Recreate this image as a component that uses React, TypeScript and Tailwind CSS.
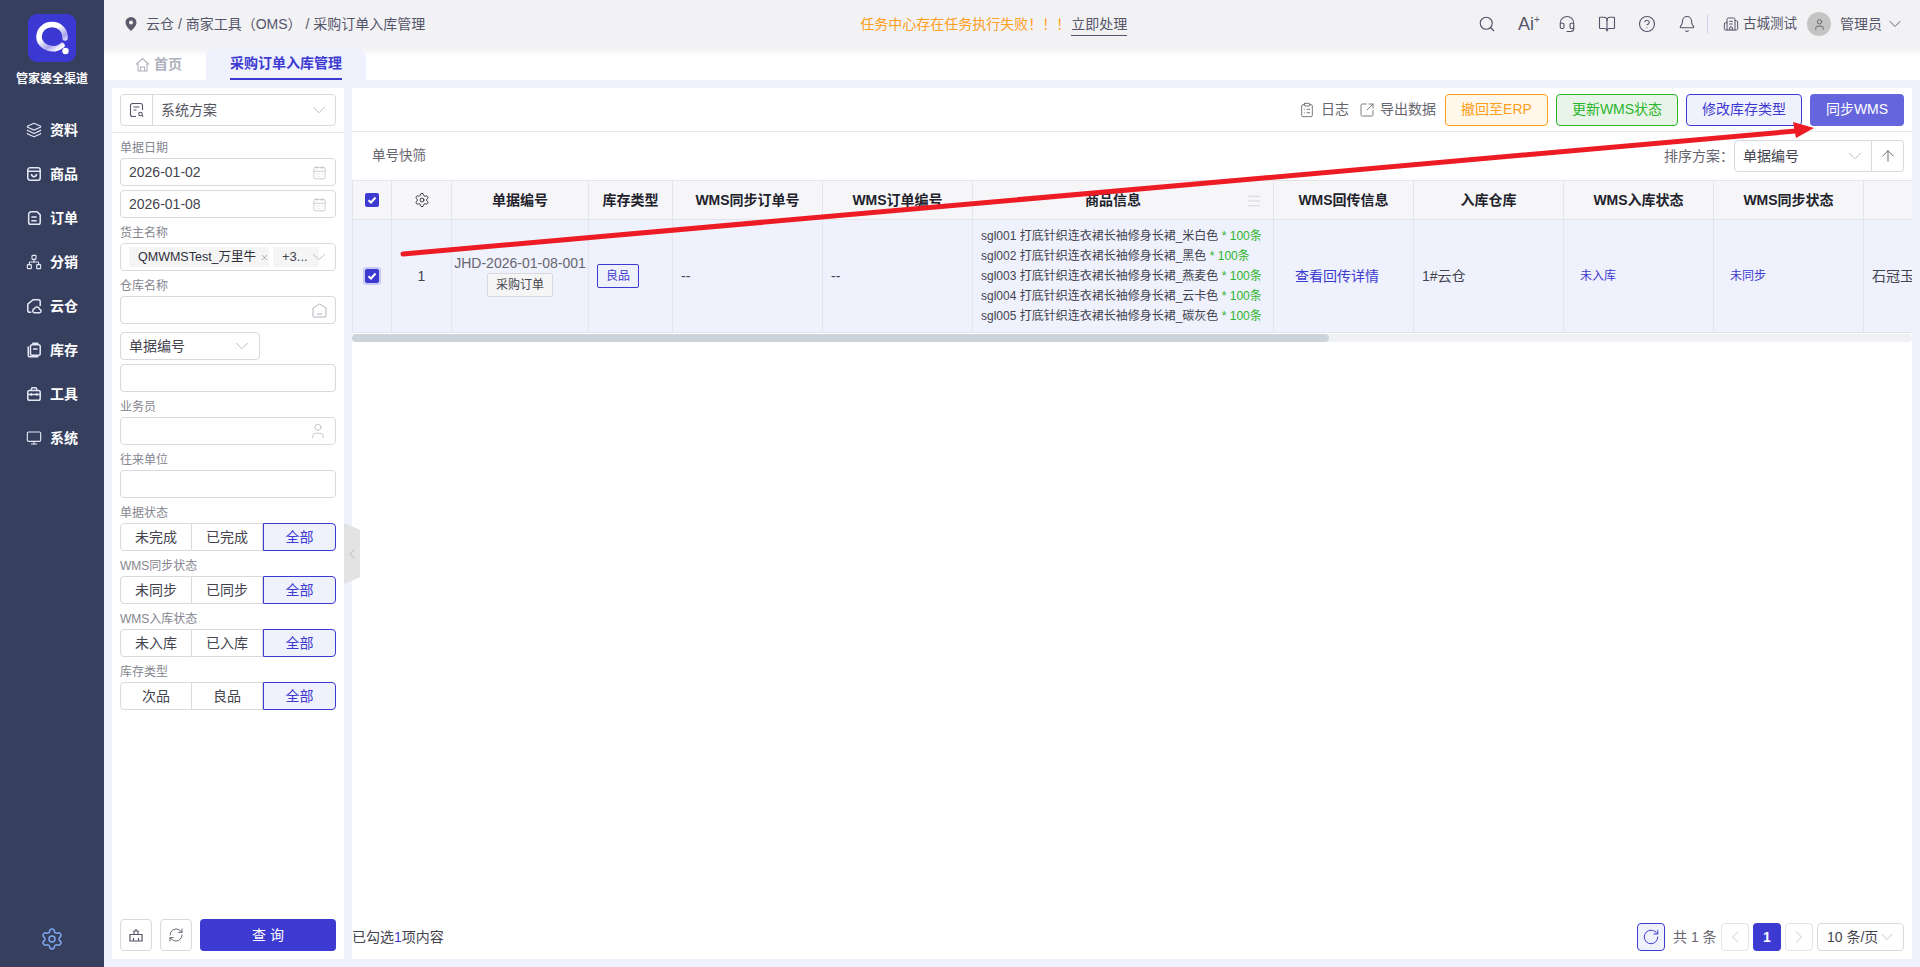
import {
  ArrowUp,
  Bell,
  BookOpen,
  Building2,
  CalendarDays,
  ChevronDown,
  ChevronLeft,
  ChevronRight,
  CircleHelp,
  ClipboardList,
  Headset,
  Layers,
  Menu,
  Monitor,
  Network,
  RefreshCw,
  RotateCw,
  Search,
  Settings,
  SquareArrowOutUpRight,
  User,
  X,
} from "lucide-react";
import type { ReactNode } from "react";

const font = "font-['Liberation_Sans','Noto_Sans_CJK_SC',sans-serif]";

function BagIcon() {
  return (
    <svg width="18" height="18" viewBox="0 0 18 18" fill="none" stroke="currentColor" strokeWidth="1.7">
      <rect x="2" y="2" width="14" height="14" rx="2.5" />
      <path d="M2 6h14M6 9c.5 2 1.5 3 3 3s2.500-1 3-3" />
    </svg>
  );
}

function OrderIcon() {
  return (
    <svg width="18" height="18" viewBox="0 0 18 18" fill="none" stroke="currentColor" strokeWidth="1.7">
      <path d="M6 2h6.500L16 5.500V14a2 2 0 0 1-2 2H5a2 2 0 0 1-2-2V5a3 3 0 0 1 3-3z" />
      <path d="M6 8h6M6 12h6" />
    </svg>
  );
}

function CloudHomeIcon() {
  return (
    <svg width="18" height="18" viewBox="0 0 18 18" fill="none" stroke="currentColor" strokeWidth="1.7">
      <path d="M6 16H4a2 2 0 0 1-2-2V7l6-5h6a2 2 0 0 1 2 2v5" />
      <path d="M9 16.500a2.300 2.300 0 0 1 .5-4.400 3 3 0 0 1 5.700.5 2 2 0 0 1 .3 3.900z" />
    </svg>
  );
}

function StockIcon() {
  return (
    <svg width="18" height="18" viewBox="0 0 18 18" fill="none" stroke="currentColor" strokeWidth="1.7">
      <rect x="5" y="3" width="11" height="12" rx="2" />
      <path d="M2.500 5v9.500A2 2 0 0 0 4.500 16.500H14M8 8h5" />
      <path d="M7 1.500h7" />
    </svg>
  );
}

function ToolIcon() {
  return (
    <svg width="18" height="18" viewBox="0 0 18 18" fill="none" stroke="currentColor" strokeWidth="1.7">
      <rect x="2" y="5" width="14" height="11" rx="2" />
      <path d="M6 5V3.500A1.500 1.500 0 0 1 7.500 2h3A1.500 1.500 0 0 1 12 3.500V5M2 9.500h14M6 8v3M12 8v3" />
    </svg>
  );
}

function SchemeIcon() {
  return (
    <svg width="16" height="16" viewBox="0 0 16 16" fill="none" stroke="currentColor" strokeWidth="1.100">
      <path d="M7 14.500H3.500a2 2 0 0 1-2-2v-9a2 2 0 0 1 2-2h8a2 2 0 0 1 2 2V8" />
      <path d="M4.500 5h6M4.500 8h3" />
      <circle cx="11.500" cy="12" r="1.800" />
      <path d="M13 13.500l1.200 1.200" />
    </svg>
  );
}

function Logo() {
  return (
    <svg width="48" height="48" viewBox="0 0 48 48" className="shrink-0">
      <rect width="48" height="48" rx="9" fill="#3c38d4" />
      <defs>
        <linearGradient id="ring" x1="0" y1="0" x2="0.8" y2="1">
          <stop offset="0.4" stopColor="#ffffff" />
          <stop offset="0.75" stopColor="#a9a6ee" />
          <stop offset="1" stopColor="#ffffff" />
        </linearGradient>
      </defs>
      <path
        d="M34 31.500a15 15 0 0 1-7 3.200C17 35.500 11 29 11 23c0-7 5.500-12.500 13-12.500S37 16 37 23v1"
        fill="none"
        stroke="url(#ring)"
        strokeWidth="5.500"
        strokeLinecap="round"
      />
      <circle cx="37.500" cy="37" r="3.200" fill="#fff" />
    </svg>
  );
}

const navItems: { label: string; icon: ReactNode }[] = [
  { label: "资料", icon: <Layers size={18} strokeWidth={1.7} /> },
  { label: "商品", icon: <BagIcon /> },
  { label: "订单", icon: <OrderIcon /> },
  { label: "分销", icon: <Network size={18} strokeWidth={1.7} /> },
  { label: "云仓", icon: <CloudHomeIcon /> },
  { label: "库存", icon: <StockIcon /> },
  { label: "工具", icon: <ToolIcon /> },
  { label: "系统", icon: <Monitor size={18} strokeWidth={1.7} /> },
];

function Sidebar() {
  return (
    <aside className="flex h-full w-[104px] shrink-0 flex-col items-center bg-[#373f5f] text-white">
      <div className="mt-[14px]">
        <Logo />
      </div>
      <div className="mt-[9px] text-[12px] leading-[16px] font-bold whitespace-nowrap">管家婆全渠道</div>
      <nav className="mt-[21px] flex flex-col">
        {navItems.map((item) => (
          <div key={item.label} className="flex h-[44px] w-[52px] items-center gap-[8px] text-[14px] font-bold">
            <span className="flex w-[16px] justify-center text-[#e4e7f5]">{item.icon}</span>
            <span className="whitespace-nowrap">{item.label}</span>
          </div>
        ))}
      </nav>
      <div className="mt-auto mb-[16px] text-[#7ea6ee]">
        <Settings size={24} strokeWidth={1.5} />
      </div>
    </aside>
  );
}

function TopBar() {
  return (
    <header className="relative flex h-[48px] shrink-0 items-center bg-[#f2f2f5] pr-[16px] pl-[21px] text-[14px] text-[#55556a]">
      <svg width="12" height="14" viewBox="0 0 12 14" className="shrink-0">
        <path d="M6 0a5.500 5.500 0 0 0-5.500 5.500C.5 9.500 6 14 6 14s5.500-4.500 5.500-8.500A5.500 5.500 0 0 0 6 0z" fill="#5c5c6e" />
        <circle cx="6" cy="5.500" r="2" fill="#f2f2f5" />
      </svg>
      <span className="ml-[9px] whitespace-nowrap">云仓 / 商家工具（OMS） / 采购订单入库管理</span>
      <div className="ml-[435px] flex items-center whitespace-nowrap">
        <span className="w-[211px] text-[#ff9d1c]">任务中心存在任务执行失败！！！</span>
        <span className="border-b border-[#55556a] leading-[22px]">立即处理</span>
      </div>
      <div className="ml-auto flex items-center text-[#55556a]">
        <div className="flex items-center gap-[22px]">
          <Search size={18} strokeWidth={1.5} />
          <span className="flex w-[18px] items-start text-[18px] leading-[18px]">
            Ai<span className="text-[10px] leading-[10px]">+</span>
          </span>
          <Headset size={18} strokeWidth={1.5} />
          <BookOpen size={18} strokeWidth={1.5} />
          <CircleHelp size={18} strokeWidth={1.5} />
          <Bell size={18} strokeWidth={1.5} />
        </div>
        <span className="mr-[15px] ml-[11px] h-[20px] w-px bg-[#cfd3ee]" />
        <Building2 size={16} strokeWidth={1.5} />
        <span className="ml-[4px] text-[13.500px] whitespace-nowrap">古城测试</span>
        <span className="ml-[10px] flex h-[24px] w-[24px] items-center justify-center rounded-full bg-[#c4c4c4] text-[#555]">
          <User size={13} strokeWidth={1.5} />
        </span>
        <span className="ml-[9px] whitespace-nowrap">管理员</span>
        <ChevronDown size={20} strokeWidth={1.1} className="-mr-[1px] ml-[3px]" />
      </div>
    </header>
  );
}

function Tabs() {
  return (
    <div className="flex h-[32px] shrink-0 items-stretch bg-[linear-gradient(#f2f2f5,#ffffff_9px)] pl-[31px] text-[14px]">
      <div className="flex w-[71px] items-center gap-[4px] font-bold text-[#aeb1bd]">
        <svg width="15" height="15" viewBox="0 0 15 15" fill="none" stroke="currentColor" strokeWidth="1.100">
          <path d="M1 7.500 7.500 1.500 14 7.500M3 6.500V14h9V6.500M5.500 14v-4h4v4" />
        </svg>
        首页
      </div>
      <div className="flex w-[160px] justify-center rounded-t-[10px] bg-[#eff1fd]">
        <span className="flex h-full items-center border-b-2 border-[#3d3ad1] font-bold text-[#3d3ad1]">采购订单入库管理</span>
      </div>
    </div>
  );
}

function Box({ children, className = "" }: { children?: ReactNode; className?: string }) {
  return (
    <div className={`flex h-[28px] items-center rounded-[4px] border border-[#d9d9de] bg-white px-[8px] text-[14px] text-[#44444f] ${className}`}>
      {children}
    </div>
  );
}

function Field({ label, children }: { label: string; children: ReactNode }) {
  return (
    <div className="mt-[5px]">
      <div className="flex h-[20px] items-center text-[12px] text-[#85858f]">{label}</div>
      {children}
    </div>
  );
}

function Segment({ label, options }: { label: string; options: string[] }) {
  return (
    <Field label={label}>
      <div className="grid h-[28px] grid-cols-[72px_71px_73px] text-[14px] text-[#44444f]">
        <div className="flex items-center justify-center rounded-l-[4px] border border-[#d9d9de]">{options[0]}</div>
        <div className="flex items-center justify-center border-y border-r border-[#d9d9de]">{options[1]}</div>
        <div className="flex items-center justify-center rounded-r-[4px] border border-[#3d3ad1] bg-[#eff1fd] text-[#3d3ad1]">全部</div>
      </div>
    </Field>
  );
}

function Calendar() {
  return <CalendarDays size={15} strokeWidth={1} className="ml-auto text-[#b4b4bc]" />;
}

function FilterPanel() {
  return (
    <section className="relative flex w-[232px] shrink-0 flex-col bg-white">
      <div className="h-[45px] border-b border-[#e8e8ec] px-[8px] pt-[6px]">
        <div className="flex h-[32px] items-center rounded-[4px] border border-[#d9d9de] text-[14px] text-[#55555f]">
          <span className="flex h-full w-[32px] items-center justify-center border-r border-[#d9d9de] text-[#55556a]">
            <SchemeIcon />
          </span>
          <span className="ml-[8px]">系统方案</span>
          <ChevronDown size={22} strokeWidth={1} className="mr-[5px] ml-auto text-[#b8b8c0]" />
        </div>
      </div>
      <div className="flex flex-1 flex-col px-[8px]">
        <Field label="单据日期">
          <Box>
            2026-01-02
            <Calendar />
          </Box>
        </Field>
        <Box className="mt-[4px]">
          2026-01-08
          <Calendar />
        </Box>
        <Field label="货主名称">
          <Box className="gap-[4px]">
            <span className="flex h-[20px] w-[140px] shrink-0 items-center gap-[4px] bg-[#f5f5f5] pl-[9px] text-[12.500px] whitespace-nowrap text-[#2f2f3a]">
              QMWMSTest_万里牛
              <X size={11} strokeWidth={1.3} className="text-[#66666f]" />
            </span>
            <span className="flex h-[20px] w-[46px] shrink-0 items-center bg-[#f5f5f5] pl-[9px] text-[13px] whitespace-nowrap">+3...</span>
            <ChevronDown size={22} strokeWidth={1} className="-ml-[15px] shrink-0 text-[#b8b8c0]" />
          </Box>
        </Field>
        <Field label="仓库名称">
          <Box>
            <svg width="15" height="15" viewBox="0 0 15 15" fill="none" stroke="#b4b4bc" strokeWidth="1" className="ml-auto">
              <path d="M1 5 7.500 1 14 5v8a1 1 0 0 1-1 1H2a1 1 0 0 1-1-1zM5 11h5" />
            </svg>
          </Box>
        </Field>
        <Box className="mt-[8px] w-[140px]">
          单据编号
          <ChevronDown size={22} strokeWidth={1} className="-mr-[2px] ml-auto text-[#b8b8c0]" />
        </Box>
        <Box className="mt-[4px]" />
        <Field label="业务员">
          <Box>
            <User size={18} strokeWidth={1} className="ml-auto text-[#b4b4bc]" />
          </Box>
        </Field>
        <Field label="往来单位">
          <Box />
        </Field>
        <Segment label="单据状态" options={["未完成", "已完成"]} />
        <Segment label="WMS同步状态" options={["未同步", "已同步"]} />
        <Segment label="WMS入库状态" options={["未入库", "已入库"]} />
        <Segment label="库存类型" options={["次品", "良品"]} />
        <div className="mt-auto mb-[8px] flex gap-[8px]">
          <button className="flex h-[32px] w-[32px] items-center justify-center rounded-[4px] border border-[#d9d9de] text-[#55556a]">
            <svg width="14" height="14" viewBox="0 0 14 14" fill="none" stroke="currentColor" strokeWidth="1.200">
              <path d="M1 6.500h12V13H1zM5 6.500V3h4v3.500M7 1v2M4.500 13v-3M9.500 13v-3" />
            </svg>
          </button>
          <button className="flex h-[32px] w-[32px] items-center justify-center rounded-[4px] border border-[#d9d9de] text-[#44444f]">
            <RefreshCw size={16} strokeWidth={1.2} />
          </button>
          <button className="h-[32px] w-[136px] rounded-[4px] bg-[#3d3ad1] pl-[4px] text-[14px] tracking-[4px] text-white">查询</button>
        </div>
      </div>
      {/* collapse handle sits over the gutter */}
      <div className="absolute top-[435px] -right-[16px] flex h-[61px] w-[16px] items-center justify-center bg-[#e3e3e3] text-[#a8a8a8] [clip-path:polygon(0_0,100%_11%,100%_89%,0_100%)]">
        <ChevronLeft size={16} strokeWidth={1} />
      </div>
    </section>
  );
}

const goods = [
  "sgl001 打底针织连衣裙长袖修身长裙_米白色",
  "sgl002 打底针织连衣裙长袖修身长裙_黑色",
  "sgl003 打底针织连衣裙长袖修身长裙_燕麦色",
  "sgl004 打底针织连衣裙长袖修身长裙_云卡色",
  "sgl005 打底针织连衣裙长袖修身长裙_碳灰色",
];

const columns = [39, 60, 137, 84, 150, 150, 301, 140, 150, 150, 150, 150];

function Check({ halo = false }: { halo?: boolean }) {
  return (
    <span className={`mx-auto flex h-[14px] w-[14px] items-center justify-center rounded-[2px] bg-[#3d3ad1] ${halo ? "shadow-[0_0_0_2px_#c9c8f3]" : ""}`}>
      <svg width="10" height="10" viewBox="0 0 10 10" fill="none" stroke="#fff" strokeWidth="2">
        <path d="M1.500 5.200 4 7.500 8.500 2.500" />
      </svg>
    </span>
  );
}

function OrderTable() {
  const th = "border-r border-b border-[#e4e5ec] text-center text-[14px] font-bold text-[#22222c]";
  const td = "border-r border-b border-[#e4e5ec]";
  return (
    <div className="h-[162px] shrink-0 overflow-hidden">
      <table className="table-fixed border-collapse border-t border-[#e4e5ec]" style={{ width: 1661 }}>
        <colgroup>
          {columns.map((w, i) => (
            <col key={i} style={{ width: w }} />
          ))}
        </colgroup>
        <thead>
          <tr className="h-[39px] bg-[#f6f6f9]">
            <th className={`${th} border-l`}>
              <Check />
            </th>
            <th className={th}>
              <Settings size={16} strokeWidth={1.3} className="mx-auto" />
            </th>
            <th className={th}>单据编号</th>
            <th className={th}>库存类型</th>
            <th className={th}>WMS同步订单号</th>
            <th className={th}>WMS订单编号</th>
            <th className={`${th} relative pr-[20px]`}>
              商品信息
              <Menu size={16} strokeWidth={1} className="absolute top-[12px] right-[11px] text-[#c4c4cc]" />
            </th>
            <th className={th}>WMS回传信息</th>
            <th className={th}>入库仓库</th>
            <th className={th}>WMS入库状态</th>
            <th className={th}>WMS同步状态</th>
            <th className={th} />
          </tr>
        </thead>
        <tbody>
          <tr className="h-[113px] bg-[#eff1fd] text-[14px] text-[#44444f]">
            <td className={`${td} border-l`}>
              <Check halo />
            </td>
            <td className={`${td} text-center`}>1</td>
            <td className={`${td} text-center`}>
              <div className="text-[14px] leading-[16px] whitespace-nowrap text-[#66666f]">JHD-2026-01-08-001</div>
              <span className="mt-[2px] inline-flex h-[24px] w-[66px] items-center justify-center rounded-[2px] border border-[#d9d9de] bg-[#f5f5f5] text-[12px]">采购订单</span>
            </td>
            <td className={`${td} pl-[8px]`}>
              <span className="flex h-[24px] w-[42px] items-center justify-center rounded-[2px] border border-[#3d3ad1] text-[12px] text-[#3d3ad1]">良品</span>
            </td>
            <td className={`${td} pl-[8px]`}>--</td>
            <td className={`${td} pl-[8px]`}>--</td>
            <td className={`${td} pl-[8px] text-[12px] leading-[20px] whitespace-nowrap`}>
              {goods.map((g) => (
                <div key={g}>
                  {g} <span className="text-[#2bb52b]">* 100条</span>
                </div>
              ))}
            </td>
            <td className={`${td} pl-[21px]`}>
              <span className="text-[#3d3ad1]">查看回传详情</span>
            </td>
            <td className={`${td} pl-[8px]`}>1#云仓</td>
            <td className={`${td} pl-[16px] text-[12px]`}>
              <span className="text-[#3d3ad1]">未入库</span>
            </td>
            <td className={`${td} pl-[16px] text-[12px]`}>
              <span className="text-[#3d3ad1]">未同步</span>
            </td>
            <td className={`${td} pl-[8px]`}>石冠玉</td>
          </tr>
        </tbody>
      </table>
      <div className="mt-[1px] h-[8px] rounded-[4px] bg-[#f0f1f4]">
        <div className="h-full w-[977px] rounded-[4px] bg-[#cdd3da]" />
      </div>
    </div>
  );
}

function Pager() {
  const btn = "flex h-[28px] w-[28px] items-center justify-center rounded-[4px] border border-[#e4e4ea] text-[#c4c4cc]";
  return (
    <div className="flex items-center text-[14px] text-[#66666f]">
      <span className="flex h-[28px] w-[28px] items-center justify-center rounded-[4px] border border-[#3d3ad1] bg-[#eff1fd] text-[#3d3ad1]">
        <RotateCw size={18} strokeWidth={1.3} />
      </span>
      <span className="mr-[4px] ml-[8px] w-[44px] whitespace-nowrap">共 1 条</span>
      <span className={btn}>
        <ChevronLeft size={20} strokeWidth={1.1} />
      </span>
      <span className="mx-[4px] flex h-[28px] w-[28px] items-center justify-center rounded-[4px] bg-[#3d3ad1] font-bold text-white">1</span>
      <span className={btn}>
        <ChevronRight size={20} strokeWidth={1.1} />
      </span>
      <span className="ml-[4px] flex h-[28px] w-[87px] items-center justify-between rounded-[4px] border border-[#d9d9de] pr-[6px] pl-[9px] whitespace-nowrap text-[#44444f]">
        10 条/页
        <ChevronDown size={20} strokeWidth={1} className="-ml-[4px] text-[#b8b8c0]" />
      </span>
    </div>
  );
}

function MainPanel() {
  return (
    <section className="flex min-w-0 flex-1 flex-col overflow-hidden bg-white">
      <div className="flex h-[44px] shrink-0 items-center justify-end border-b border-[#e8e8ec] pr-[8px] text-[14px]">
        <span className="flex items-center gap-[6px] text-[#66666f]">
          <ClipboardList size={16} strokeWidth={1.3} />
          日志
        </span>
        <span className="ml-[10px] flex items-center gap-[5px] text-[#66666f]">
          <SquareArrowOutUpRight size={16} strokeWidth={1.3} />
          导出数据
        </span>
        <button className="ml-[9px] h-[32px] w-[103px] rounded-[4px] border border-[#ff9d1c] bg-[#fff8ea] text-[#ff9d1c]">撤回至ERP</button>
        <button className="ml-[8px] h-[32px] w-[122px] rounded-[4px] border border-[#2bb52b] bg-[#e8f4e8] text-[#2bb52b]">更新WMS状态</button>
        <button className="ml-[8px] h-[32px] w-[116px] rounded-[4px] border border-[#3d3ad1] bg-[#eff1fd] text-[#3d3ad1]">修改库存类型</button>
        <button className="ml-[8px] h-[32px] w-[94px] rounded-[4px] bg-[#6565dd] text-white">同步WMS</button>
      </div>
      <div className="flex h-[48px] shrink-0 items-center pr-[8px] pl-[20px] text-[14px] text-[#66666f]">
        <span className="text-[13.500px]">单号快筛</span>
        <span className="ml-auto">排序方案：</span>
        <span className="flex h-[32px] w-[138px] items-center justify-between rounded-l-[4px] border border-[#d9d9de] pr-[5px] pl-[8px] text-[#44444f]">
          单据编号
          <ChevronDown size={22} strokeWidth={1} className="text-[#b8b8c0]" />
        </span>
        <span className="flex h-[32px] w-[32px] items-center justify-center rounded-r-[4px] border-y border-r border-[#d9d9de] text-[#66666f]">
          <ArrowUp size={18} strokeWidth={1.3} />
        </span>
      </div>
      <OrderTable />
      <div className="mt-auto mb-[8px] flex h-[28px] shrink-0 items-center justify-between pr-[8px] text-[14px] text-[#44444f]">
        <span>
          已勾选<span className="text-[#3d3ad1]">1</span>项内容
        </span>
        <Pager />
      </div>
    </section>
  );
}

// hand-drawn annotation on top of the screenshot
function RedArrow() {
  return (
    <svg className="pointer-events-none absolute top-0 left-0" width="1920" height="967" fill="none">
      <path d="M403 254 1796 131" stroke="#ed1c24" strokeWidth="5" strokeLinecap="round" />
      <path d="M1814 128 1793 122 1796 138z" fill="#ed1c24" />
    </svg>
  );
}

export default function App() {
  return (
    <div className={`relative flex h-screen w-screen overflow-hidden bg-white ${font}`}>
      <Sidebar />
      <div className="flex min-w-0 flex-1 flex-col">
        <TopBar />
        <Tabs />
        <main className="flex min-h-0 flex-1 gap-[8px] bg-[#eff1fd] p-[8px]">
          <FilterPanel />
          <MainPanel />
        </main>
      </div>
      <RedArrow />
    </div>
  );
}
